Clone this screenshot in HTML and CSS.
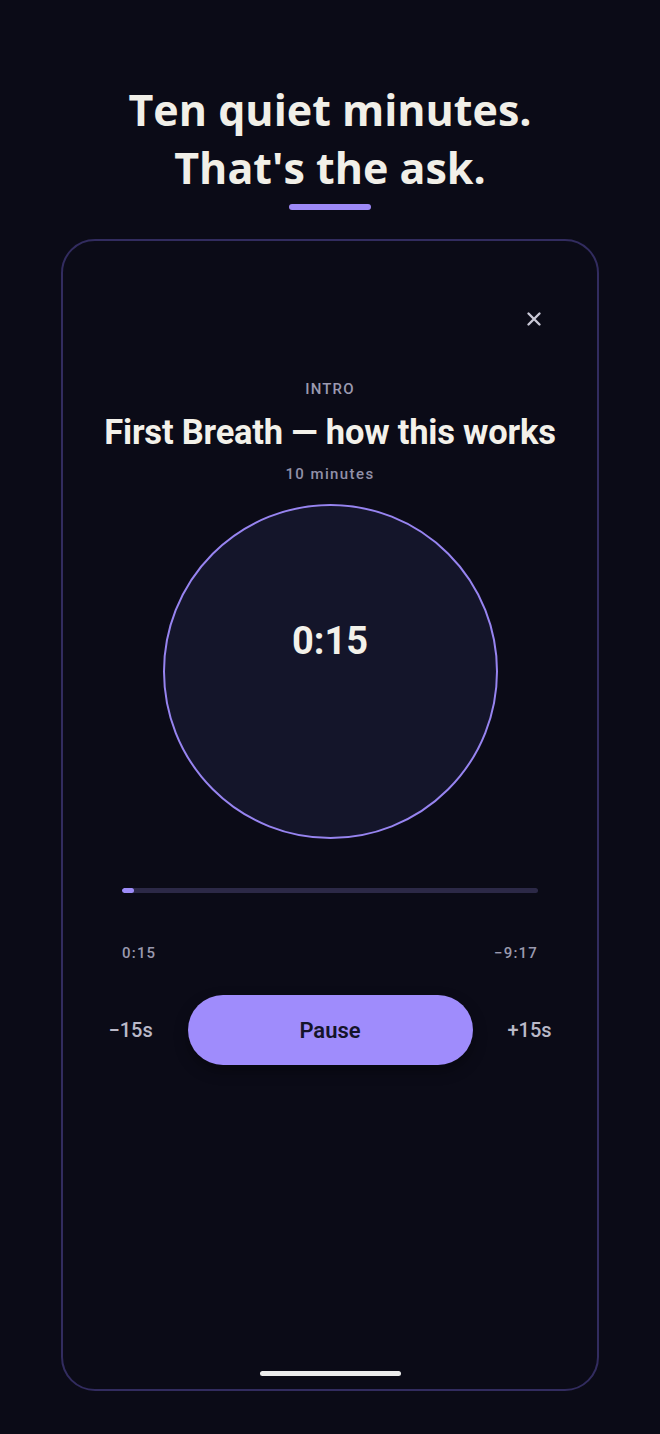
FILE: index.html
```html
<!DOCTYPE html>
<html lang="en">

<head>
    <meta charset="UTF-8">
    <meta name="viewport" content="width=device-width, initial-scale=1.0">
    <title>First Breath</title>
    <link rel="stylesheet" href="styles.css">
</head>

<body>

<header class="hero">
    <h1>Ten quiet minutes.<br>That's the ask.</h1>
    <div class="hero-bar"></div>
</header>

<section class="phone">
    <div class="top-row">
        <button class="close" aria-label="Close">
            <svg width="16" height="16" viewBox="0 0 16 16">
                <path d="M2.5 2.5 L13.5 13.5 M13.5 2.5 L2.5 13.5" stroke="#c9c8d6" stroke-width="2.4" stroke-linecap="round"/>
            </svg>
        </button>
    </div>

    <div class="label">INTRO</div>
    <h2 class="title">First Breath — how this works</h2>
    <div class="duration">10 minutes</div>

    <div class="dial">
        <span class="dial-time">0:15</span>
    </div>

    <div class="progress">
        <div class="progress-fill"></div>
    </div>

    <div class="times">
        <span>0:15</span>
        <span>−9:17</span>
    </div>

    <div class="controls">
        <button class="skip">−15s</button>
        <button class="pause">Pause</button>
        <button class="skip">+15s</button>
    </div>

    <div class="home-indicator"></div>
</section>

</body>
</html>
```

FILE: styles.css
```css
body {
    margin: 0;
    padding: 0;
    background: #0b0b17;
    font-family: Roboto, "Liberation Sans", sans-serif;
    color: #f2f0ea;
}

.hero {
    padding-top: 81px;
    text-align: center;
}

.hero h1 {
    margin: 0;
    font-family: "Open Sans", "Noto Sans", sans-serif;
    font-weight: 700;
    font-size: 43px;
    line-height: 58px;
    color: #f1efe8;
}

.hero-bar {
    width: 82px;
    height: 6px;
    border-radius: 3px;
    background: #9d89f7;
    margin: 7px auto 0;
}

.phone {
    box-sizing: border-box;
    margin: 29px 61px 0;
    height: 1152px;
    border: 2px solid #322c5f;
    border-radius: 34px;
    display: flex;
    flex-direction: column;
    align-items: center;
    padding-bottom: 13px;
}

.top-row {
    align-self: stretch;
    display: flex;
    justify-content: flex-end;
    padding: 70px 55px 0 0;
}

.close {
    background: none;
    border: none;
    padding: 0;
    width: 16px;
    height: 16px;
    cursor: pointer;
}

.close svg {
    display: block;
}

.label {
    margin-top: 52px;
    font-size: 15px;
    line-height: 20px;
    letter-spacing: 1.2px;
    font-weight: 500;
    color: #9b9ab0;
}

.title {
    margin: 13px 0 0;
    font-size: 34.5px;
    line-height: 40px;
    font-weight: 700;
    color: #f3f1ea;
    letter-spacing: -0.2px;
}

.duration {
    margin-top: 12px;
    font-size: 15px;
    line-height: 20px;
    letter-spacing: 1.4px;
    color: #9190a8;
    font-weight: 500;
}

.dial {
    box-sizing: border-box;
    margin-top: 20px;
    width: 335px;
    height: 335px;
    border: 2px solid #9784f0;
    border-radius: 50%;
    background: #14152a;
    display: flex;
    align-items: center;
    justify-content: center;
}

.dial-time {
    font-size: 38px;
    font-weight: 700;
    color: #f3f1ea;
    margin-top: -62px;
}

.progress {
    margin-top: 49px;
    width: 416px;
    height: 5px;
    border-radius: 3px;
    background: #2c2947;
    overflow: hidden;
}

.progress-fill {
    width: 12px;
    height: 100%;
    border-radius: 3px;
    background: #9d8cf8;
}

.times {
    margin-top: 50px;
    width: 416px;
    display: flex;
    justify-content: space-between;
    font-size: 15px;
    line-height: 20px;
    letter-spacing: 1.2px;
    font-weight: 500;
    color: #9a99ae;
}

.controls {
    margin-top: 32px;
    display: flex;
    align-items: center;
    gap: 35px;
}

.skip {
    background: none;
    border: none;
    padding: 0;
    font-family: Roboto, "Liberation Sans", sans-serif;
    font-size: 20px;
    font-weight: 500;
    color: #bab9c8;
    width: 44px;
    cursor: pointer;
    white-space: nowrap;
}

.pause {
    width: 285px;
    height: 70px;
    border: none;
    border-radius: 35px;
    background: #9f8cfc;
    color: #15142a;
    font-family: Roboto, "Liberation Sans", sans-serif;
    font-size: 22px;
    font-weight: 600;
    box-shadow: 0 6px 14px rgba(0, 0, 0, 0.35);
    cursor: pointer;
}

.home-indicator {
    margin-top: auto;
    width: 141px;
    height: 5px;
    border-radius: 3px;
    background: #ececec;
}
```
